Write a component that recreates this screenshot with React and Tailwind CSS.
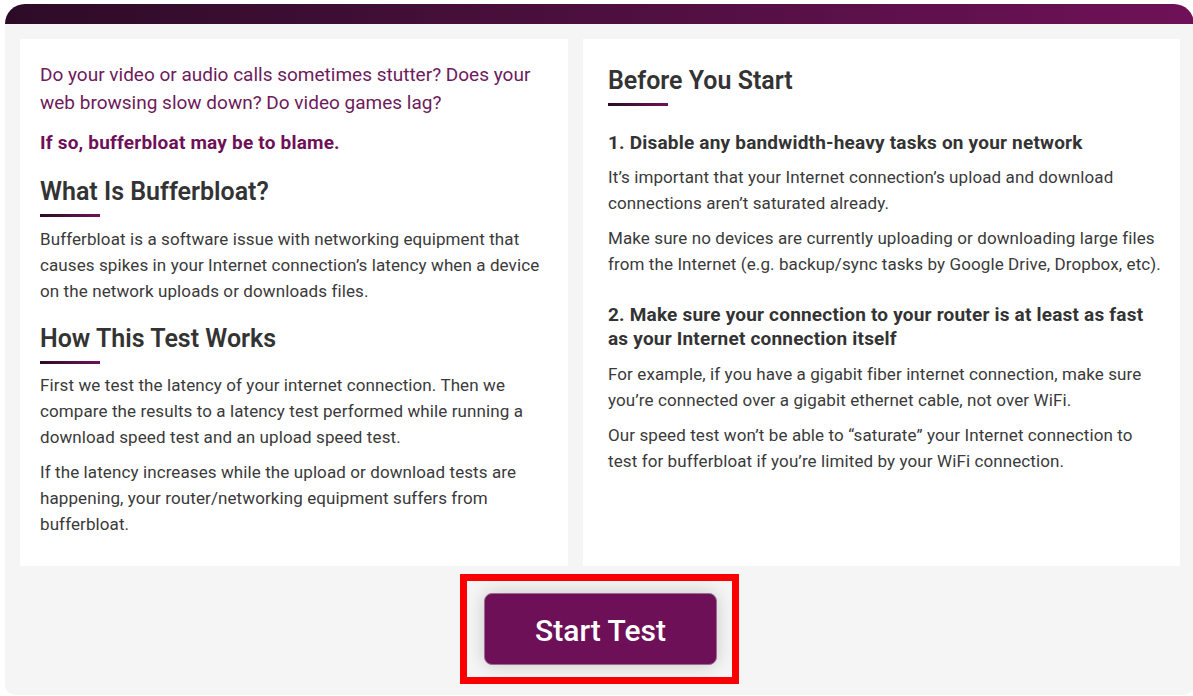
import React from "react";

function Underline() {
  return <div className="w-[60px] h-[3px] mt-[6px] bg-linear-to-r from-[#2d0b27] to-[#6f1158]" />;
}

function Lines({ lines }) {
  return lines.map((l, i) => (
    <React.Fragment key={i}>
      {l}
      {i < lines.length - 1 && <br />}
    </React.Fragment>
  ));
}

export default function App() {
  return (
    <div className="min-h-[696px] bg-white pl-[5px] pt-[4px] font-[Roboto,sans-serif] overflow-hidden">
      <div className="w-[1189px] flex flex-col">
        <div className="h-[20px] rounded-t-[20px] bg-linear-to-r from-[#2d0b27] to-[#6f1158]" />
        <div className="bg-[#f5f5f5] rounded-b-[10px] pt-[15px] pl-[15px] pb-[11px] flex flex-col">
          <div className="flex gap-[15px] h-[527px]">
            {/* Left card */}
            <div className="w-[548px] bg-white pl-[20px] pr-[20px] pt-[22px] whitespace-nowrap">
              <p className="text-[19px] leading-[28px] text-[#6e1a5b]">
                <Lines lines={["Do your video or audio calls sometimes stutter? Does your", "web browsing slow down? Do video games lag?"]} />
              </p>
              <p className="mt-[12px] text-[19px] leading-[28px] font-bold text-[#6e1057] tracking-[0.2px]">
                If so, bufferbloat may be to blame.
              </p>
              <h2 className="mt-[19px] text-[25px] leading-[32px] font-semibold text-[#333333]">What Is Bufferbloat?</h2>
              <Underline />
              <p className="mt-[9px] text-[17px] leading-[26px] text-[#3a3a3a] tracking-[0.1px]">
                <Lines lines={[
                  "Bufferbloat is a software issue with networking equipment that",
                  "causes spikes in your Internet connection’s latency when a device",
                  "on the network uploads or downloads files.",
                ]} />
              </p>
              <h2 className="mt-[19px] text-[25px] leading-[32px] font-semibold text-[#333333]">How This Test Works</h2>
              <Underline />
              <p className="mt-[8px] text-[17px] leading-[26px] text-[#3a3a3a] tracking-[0.1px]">
                <Lines lines={[
                  "First we test the latency of your internet connection. Then we",
                  "compare the results to a latency test performed while running a",
                  "download speed test and an upload speed test.",
                ]} />
              </p>
              <p className="mt-[9px] text-[17px] leading-[26px] text-[#3a3a3a] tracking-[0.1px]">
                <Lines lines={[
                  "If the latency increases while the upload or download tests are",
                  "happening, your router/networking equipment suffers from",
                  "bufferbloat.",
                ]} />
              </p>
            </div>
            {/* Right card */}
            <div className="w-[597px] bg-white pl-[25px] pr-[20px] pt-[26px] whitespace-nowrap">
              <h2 className="text-[25px] leading-[32px] font-semibold text-[#333333]">Before You Start</h2>
              <Underline />
              <h3 className="mt-[24px] text-[19px] leading-[26px] font-bold text-[#333333] tracking-[0.2px]">
                1. Disable any bandwidth-heavy tasks on your network
              </h3>
              <p className="mt-[8px] text-[17px] leading-[26px] text-[#3a3a3a] tracking-[0.1px]">
                <Lines lines={[
                  "It’s important that your Internet connection’s upload and download",
                  "connections aren’t saturated already.",
                ]} />
              </p>
              <p className="mt-[9px] text-[17px] leading-[26px] text-[#3a3a3a] tracking-[0.1px]">
                <Lines lines={[
                  "Make sure no devices are currently uploading or downloading large files",
                  "from the Internet (e.g. backup/sync tasks by Google Drive, Dropbox, etc).",
                ]} />
              </p>
              <h3 className="mt-[26px] text-[19px] leading-[24px] font-bold text-[#333333] tracking-[0.2px]">
                <Lines lines={[
                  "2. Make sure your connection to your router is at least as fast",
                  "as your Internet connection itself",
                ]} />
              </h3>
              <p className="mt-[10px] text-[17px] leading-[26px] text-[#3a3a3a] tracking-[0.1px]">
                <Lines lines={[
                  "For example, if you have a gigabit fiber internet connection, make sure",
                  "you’re connected over a gigabit ethernet cable, not over WiFi.",
                ]} />
              </p>
              <p className="mt-[9px] text-[17px] leading-[26px] text-[#3a3a3a] tracking-[0.1px]">
                <Lines lines={[
                  "Our speed test won’t be able to “saturate” your Internet connection to",
                  "test for bufferbloat if you’re limited by your WiFi connection.",
                ]} />
              </p>
            </div>
          </div>
          {/* Button area */}
          <div className="mt-[8px] flex justify-center pr-[15px]">
            <div className="border-[7px] border-[#fb0000] pt-[12px] pb-[12px] pl-[17px] pr-[15px]">
              <button className="w-[233px] h-[72px] rounded-[8px] bg-[#6e1057] border border-[#9d6b90] text-white text-[30px] font-medium pt-[2px] shadow-[0_0_18px_rgba(0,0,0,0.18)]">
                Start Test
              </button>
            </div>
          </div>
        </div>
      </div>
    </div>
  );
}
